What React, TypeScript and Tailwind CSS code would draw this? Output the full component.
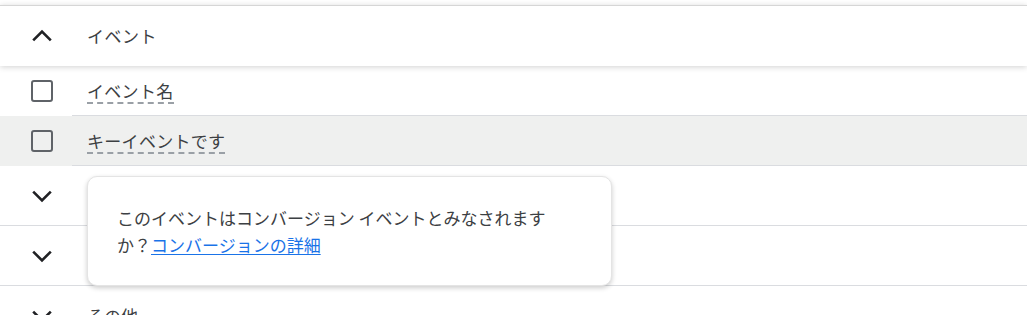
import React from "react";

const font = { fontFamily: '"Noto Sans CJK JP", "Noto Sans", sans-serif' };

function ChevronUp() {
  return (
    <svg width="24" height="24" viewBox="0 0 24 24" className="block">
      <path d="M3.2 16.4 L12 7.6 L20.8 16.4" fill="none" stroke="#202124" strokeWidth="2.6" />
    </svg>
  );
}

function ChevronDown() {
  return (
    <svg width="24" height="24" viewBox="0 0 24 24" className="block">
      <path d="M3.2 7.6 L12 16.4 L20.8 7.6" fill="none" stroke="#202124" strokeWidth="2.6" />
    </svg>
  );
}

function Checkbox() {
  return <div className="w-[22px] h-[22px] border-[2.5px] border-[#5f6368] rounded-[3px]" />;
}

// 折りたたみ可能なグループ行
function GroupRow({ label, open }: { label: string; open?: boolean }) {
  return (
    <div className="flex items-center h-[60px] border-b border-[#dadce0]">
      <div className="w-[87px] pl-[30px] shrink-0">{open ? <ChevronUp /> : <ChevronDown />}</div>
      <span className="text-[17px] text-[#3c4043]">{label}</span>
    </div>
  );
}

function CheckRow({ label, highlight }: { label: string; highlight?: boolean }) {
  return (
    <div className={`flex h-[50px] ${highlight ? "bg-[#eff0ef]" : "bg-white"}`}>
      <div className="w-[72px] shrink-0 flex items-center pl-[31px]">
        <Checkbox />
      </div>
      <div className="flex-1 flex items-center pl-[15px] border-b border-[#dadce0]">
        <span className="text-[17px] leading-[22px] text-[#3c4043] border-b-2 border-dashed border-[#9aa0a6] pt-[2px] tracking-[0.3px]">
          {label}
        </span>
      </div>
    </div>
  );
}

export default function App() {
  return (
    <div className="relative w-[1027px] h-[315px] overflow-hidden bg-white pt-[5px]" style={font}>
      {/* ヘッダー */}
      <div className="relative z-10 bg-white border-t border-[#d6d6d6] shadow-[0_1px_6px_rgba(0,0,0,0.18)]">
        <div className="flex items-center h-[60px]">
          <div className="w-[87px] pl-[30px] shrink-0">
            <ChevronUp />
          </div>
          <span className="text-[17px] text-[#3c4043] tracking-[0.5px]">イベント</span>
        </div>
      </div>

      <CheckRow label="イベント名" />
      <CheckRow label="キーイベントです" highlight />

      <GroupRow label="ページ / スクリーン" />
      <GroupRow label="ユーザー" />
      <GroupRow label="その他" />

      {/* ツールチップ */}
      <div className="absolute left-[87px] top-[176px] w-[525px] z-20 bg-white rounded-[10px] border border-[#e4e4e4] shadow-[0_2px_5px_rgba(0,0,0,0.2)] pl-[29px] pr-[20px] py-[27px]">
        <p className="text-[17px] leading-[27px] text-[#3c4043]">
          このイベントはコンバージョン イベントとみなされます
          <br />
          か？
          <a href="#" className="text-[#1a73e8] underline underline-offset-2">
            コンバージョンの詳細
          </a>
        </p>
      </div>
    </div>
  );
}
